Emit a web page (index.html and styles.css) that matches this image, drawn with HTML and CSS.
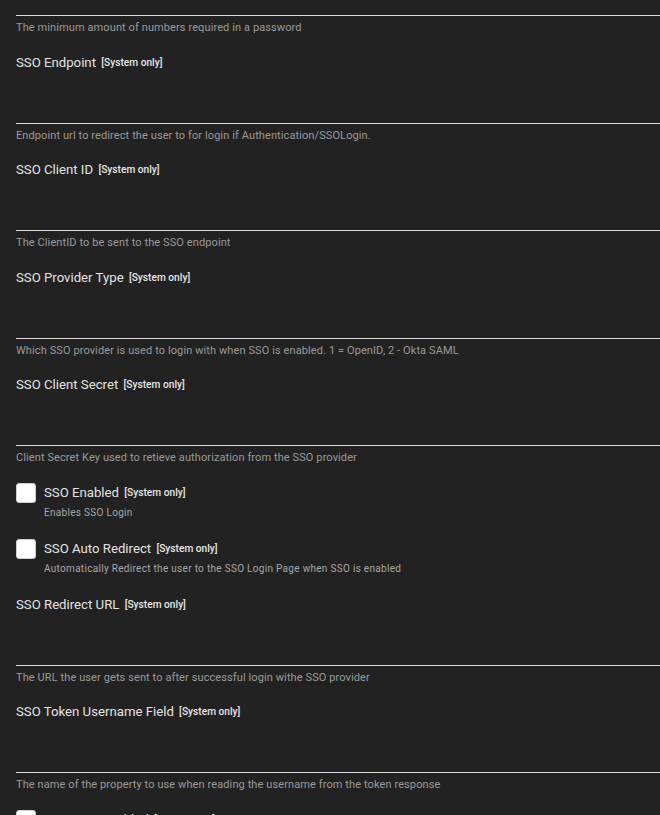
FILE: index.html
```html
<!DOCTYPE html>
<html lang="en">
<head>
  <meta charset="UTF-8" />
  <meta name="viewport" content="width=device-width, initial-scale=1" />
  <title>Settings - Authentication</title>
  <link rel="stylesheet" href="styles.css">
</head>
<body>

  <div class="settings-list">
    <!-- campo precedente, tagliato dallo scroll -->
    <div class="setting text-setting">
      <div class="setting-input cut"></div>
      <div class="setting-desc">The minimum amount of numbers required in a password</div>
    </div>

    <div class="setting text-setting">
      <div class="setting-label">SSO Endpoint <span class="tag">[System only]</span></div>
      <div class="setting-input"></div>
      <div class="setting-desc">Endpoint url to redirect the user to for login if Authentication/SSOLogin.</div>
    </div>

    <div class="setting text-setting">
      <div class="setting-label">SSO Client ID <span class="tag">[System only]</span></div>
      <div class="setting-input"></div>
      <div class="setting-desc">The ClientID to be sent to the SSO endpoint</div>
    </div>

    <div class="setting text-setting">
      <div class="setting-label">SSO Provider Type <span class="tag">[System only]</span></div>
      <div class="setting-input"></div>
      <div class="setting-desc">Which SSO provider is used to login with when SSO is enabled. 1 = OpenID, 2 - Okta SAML</div>
    </div>

    <div class="setting text-setting">
      <div class="setting-label">SSO Client Secret <span class="tag">[System only]</span></div>
      <div class="setting-input"></div>
      <div class="setting-desc">Client Secret Key used to retieve authorization from the SSO provider</div>
    </div>

    <div class="setting check-setting">
      <div class="check-row">
        <span class="checkbox"></span>
        <div class="setting-label">SSO Enabled <span class="tag">[System only]</span></div>
      </div>
      <div class="check-desc">Enables SSO Login</div>
    </div>

    <div class="setting check-setting">
      <div class="check-row">
        <span class="checkbox"></span>
        <div class="setting-label">SSO Auto Redirect <span class="tag">[System only]</span></div>
      </div>
      <div class="check-desc">Automatically Redirect the user to the SSO Login Page when SSO is enabled</div>
    </div>

    <div class="setting text-setting">
      <div class="setting-label">SSO Redirect URL <span class="tag">[System only]</span></div>
      <div class="setting-input"></div>
      <div class="setting-desc">The URL the user gets sent to after successful login withe SSO provider</div>
    </div>

    <div class="setting text-setting">
      <div class="setting-label">SSO Token Username Field <span class="tag">[System only]</span></div>
      <div class="setting-input"></div>
      <div class="setting-desc">The name of the property to use when reading the username from the token response</div>
    </div>

    <div class="setting check-setting">
      <div class="check-row">
        <span class="checkbox"></span>
        <div class="setting-label">Azure AD Enabled <span class="tag">[System only]</span></div>
      </div>
      <div class="check-desc">Enables login with Azure AD</div>
    </div>
  </div>

</body>
</html>
```

FILE: styles.css
```css
html, body {
  margin: 0;
  padding: 0;
  background: #222222;
  font-family: Roboto, 'Noto Sans', sans-serif;
  color: #dcdcdc;
  overflow: hidden;
}

.settings-list {
  padding-left: 16px;
}

.setting {
  margin-bottom: 19.5px;
}

/* Titolo del campo */
.setting-label {
  height: 16px;
  font-size: 13.2px;
  line-height: 16px;
  font-weight: 400;
  color: #e2e2e2;
}

.tag {
  font-size: 10.2px;
  line-height: 10px;
  font-weight: 500;
  color: #e6e6e6;
  margin-left: 2px;
  vertical-align: 1px;
}

/* Input con solo la linea sotto */
.setting-input {
  height: 52px;
  border-bottom: 1px solid #dcdcdc;
}

.setting-input.cut {
  height: 15px;
}

.setting-desc {
  margin-top: 5px;
  font-size: 11px;
  line-height: 14px;
  letter-spacing: 0.1px;
  color: #9a9a9a;
}

/* Checkbox */
.check-setting {
  margin-top: -1.5px;
  margin-bottom: 19px;
}

.check-setting + .check-setting {
  margin-top: 0;
}

.check-setting + .text-setting {
  padding-top: 1.5px;
}

.check-row {
  display: flex;
  align-items: center;
  gap: 8px;
  height: 20px;
}

.checkbox {
  width: 18px;
  height: 18px;
  background: #ffffff;
  border: 1px solid #cfcfcf;
  border-radius: 3px;
  flex-shrink: 0;
}

.check-desc {
  margin: 3px 0 0 28px;
  font-size: 10px;
  line-height: 14px;
  letter-spacing: 0.3px;
  color: #a8a8a8;
}
```
